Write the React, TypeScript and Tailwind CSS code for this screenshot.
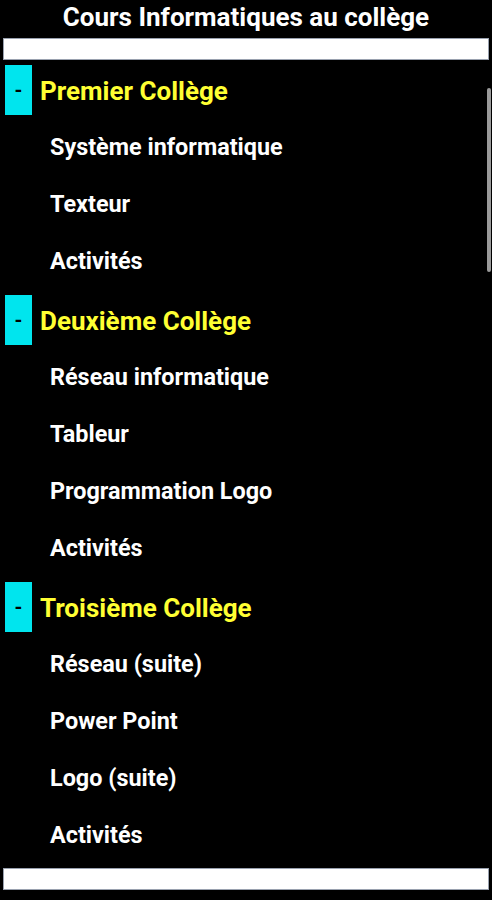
const sections = [
  {
    title: "Premier Collège",
    items: ["Système informatique", "Texteur", "Activités"],
  },
  {
    title: "Deuxième Collège",
    items: ["Réseau informatique", "Tableur", "Programmation Logo", "Activités"],
  },
  {
    title: "Troisième Collège",
    items: ["Réseau (suite)", "Power Point", "Logo (suite)", "Activités"],
  },
];

export default function App() {
  return (
    <div className="relative w-[492px] h-[900px] bg-black overflow-hidden font-['Roboto',sans-serif]">
      {/* title */}
      <div className="h-[38px] flex items-center justify-center text-white text-[26px] font-bold leading-none pb-[4px]">
        Cours Informatiques au collège
      </div>
      <div className="mx-[3px] h-[22px] bg-white border border-gray-400" />

      {/* course list */}
      <div className="relative h-[808px]">
        {sections.map((s) => (
          <div key={s.title}>
            <div className="h-[59px] flex items-center pl-[5px]">
              <div className="w-[27px] h-[50px] bg-[#00e5ee] flex items-center justify-center text-black text-[20px] font-bold leading-none">
                -
              </div>
              <span className="ml-[8px] text-[#ffff33] text-[26px] font-bold leading-none pt-[3px]">{s.title}</span>
            </div>
            {s.items.map((it, i) => (
              <div key={i} className="h-[57px] flex items-center pl-[50px] text-white text-[23.4px] font-bold leading-none">
                {it}
              </div>
            ))}
          </div>
        ))}
        {/* overlay scrollbar */}
        <div className="absolute right-[1px] top-[28px] w-[4px] h-[184px] rounded-full bg-[#9a9a9a]" />
      </div>

      <div className="mx-[3px] h-[22px] bg-white border border-gray-400" />
    </div>
  );
}
